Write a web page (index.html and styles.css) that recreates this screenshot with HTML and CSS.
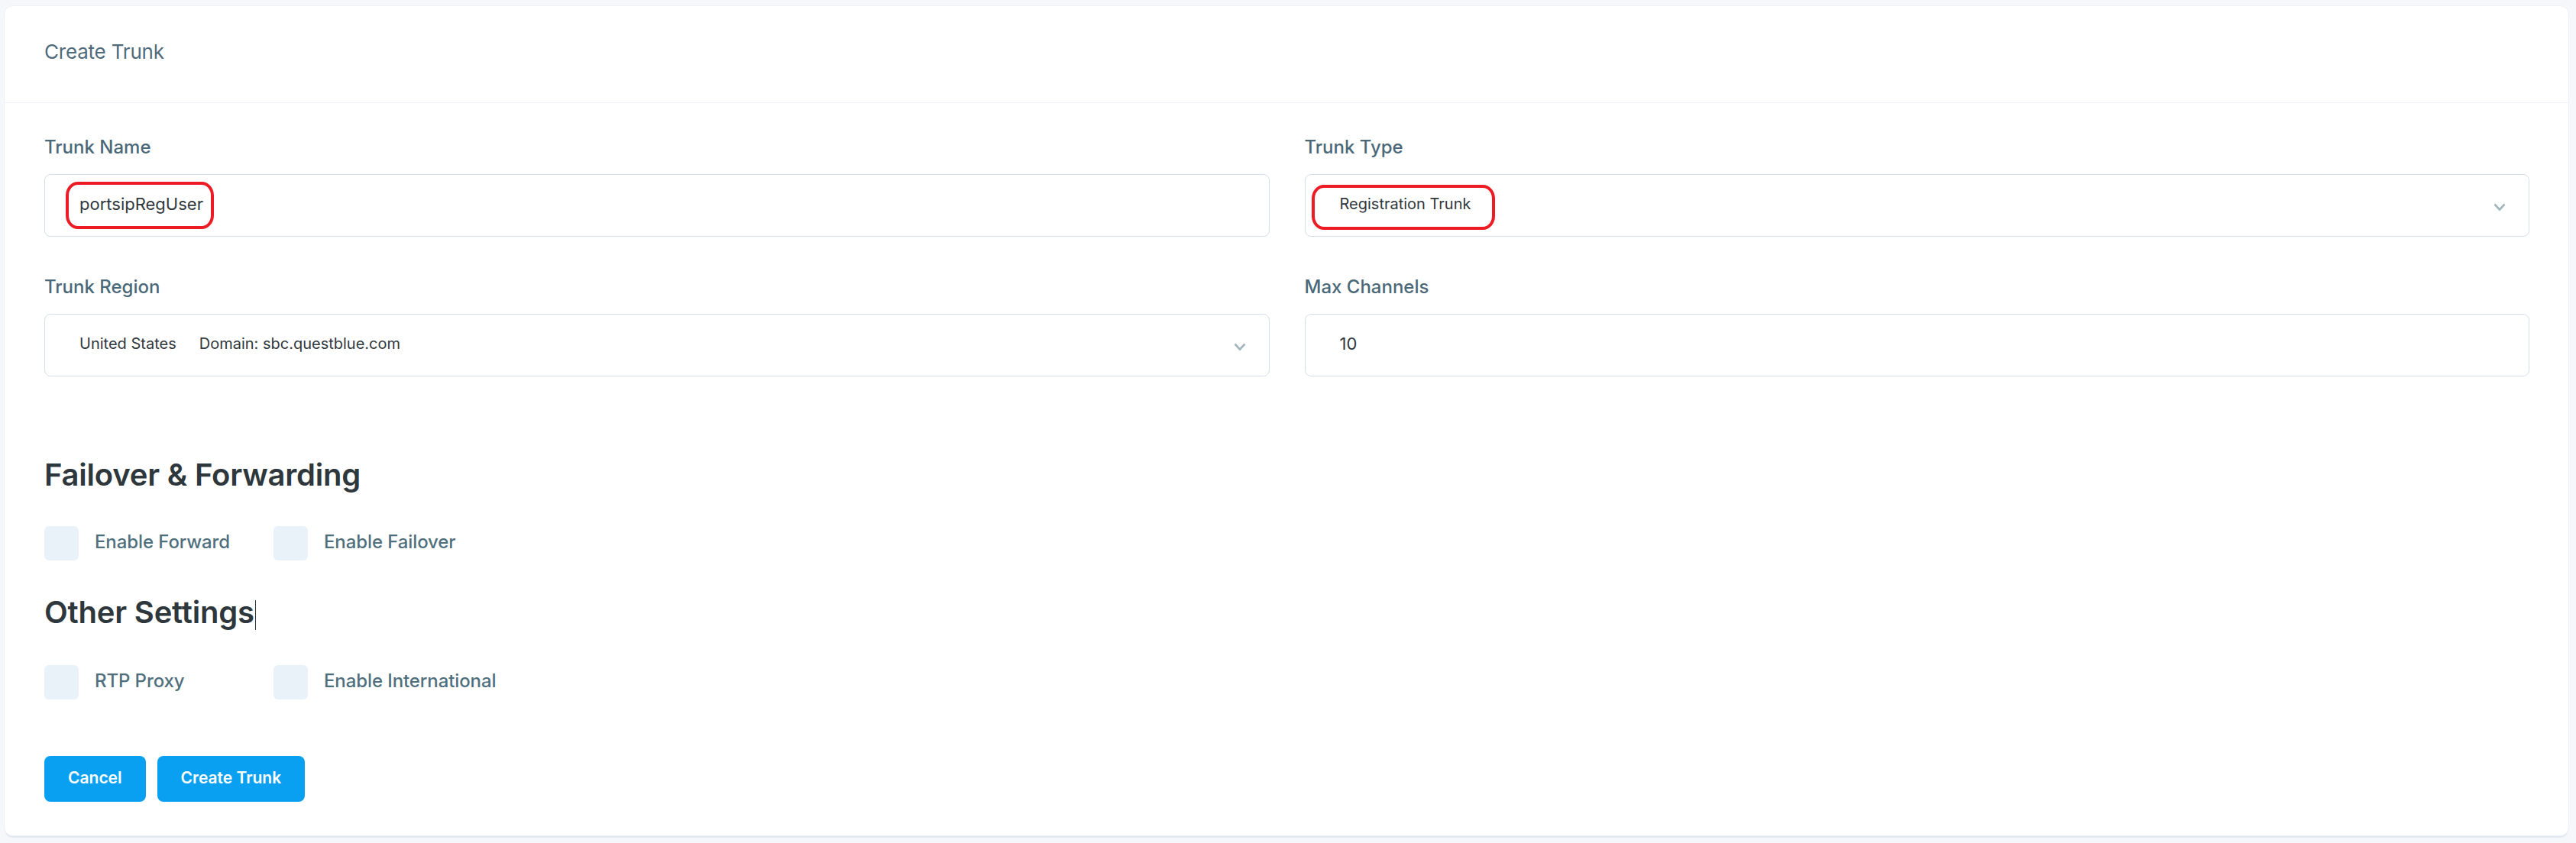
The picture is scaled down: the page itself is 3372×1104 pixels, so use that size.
FILE: index.html
```html
<!DOCTYPE html>
<html lang="en">
<head>
<meta charset="utf-8">
<title>Create Trunk</title>
<link rel="stylesheet" href="styles.css">
</head>
<body>
<div class="card">
  <div class="card-header">
    <h1 class="card-title">Create Trunk</h1>
  </div>
  <div class="card-body">
    <div class="form-grid">
      <div class="field">
        <label class="field-label">Trunk Name</label>
        <div class="control">
          <span class="control-text input-text">portsipRegUser</span>
          <span class="mark mark-name"></span>
        </div>
      </div>
      <div class="field">
        <label class="field-label">Trunk Type</label>
        <div class="control select">
          <span class="control-text select-text">Registration Trunk</span>
          <svg class="chevron" width="16" height="11" viewBox="0 0 16 11"><polyline points="1.5,1.5 8,8.5 14.5,1.5" fill="none" stroke="#a3b5bf" stroke-width="2.6"/></svg>
          <span class="mark mark-type"></span>
        </div>
      </div>
      <div class="field">
        <label class="field-label">Trunk Region</label>
        <div class="control select">
          <span class="control-text select-text"><span class="region">United States</span><span>Domain: sbc.questblue.com</span></span>
          <svg class="chevron" width="16" height="11" viewBox="0 0 16 11"><polyline points="1.5,1.5 8,8.5 14.5,1.5" fill="none" stroke="#a3b5bf" stroke-width="2.6"/></svg>
        </div>
      </div>
      <div class="field">
        <label class="field-label">Max Channels</label>
        <div class="control">
          <span class="control-text input-text">10</span>
        </div>
      </div>
    </div>

    <h2 class="section-title first">Failover &amp; Forwarding</h2>
    <div class="check-row">
      <div class="check"><span class="box"></span><span class="check-label">Enable Forward</span></div>
      <div class="check"><span class="box"></span><span class="check-label">Enable Failover</span></div>
    </div>

    <h2 class="section-title">Other Settings<span class="caret"></span></h2>
    <div class="check-row second">
      <div class="check"><span class="box"></span><span class="check-label">RTP Proxy</span></div>
      <div class="check"><span class="box"></span><span class="check-label">Enable International</span></div>
    </div>

    <div class="actions">
      <button class="btn btn-cancel">Cancel</button>
      <button class="btn btn-create">Create Trunk</button>
    </div>
  </div>
</div>
</body>
</html>
```

FILE: styles.css
```css
* { box-sizing: border-box; }

html, body {
  margin: 0;
  background: #f6f7fb;
}

body {
  padding: 7px 9px 0 5px;
  font-family: Inter, "Noto Sans", "Liberation Sans", sans-serif;
  height: 1104px;
  overflow: hidden;
}

.card {
  background: #ffffff;
  border: 1px solid #edf0f5;
  border-radius: 12px;
  box-shadow: 0 3px 1px -1px #e3e8f0;
}

.card-header {
  height: 127px;
  padding: 44px 52px 0 52px;
  border-bottom: 1px solid #eef2f6;
}

.card-title {
  margin: 0;
  font-size: 26px;
  line-height: 32px;
  font-weight: 400;
  letter-spacing: -0.2px;
  color: #4f6b7b;
}

.card-body {
  padding: 43px 51px 44px 52px;
}

.form-grid {
  display: grid;
  grid-template-columns: 1fr 1fr;
  column-gap: 46px;
  row-gap: 51px;
}

.field-label {
  display: block;
  font-size: 24px;
  line-height: 30px;
  font-weight: 500;
  color: #4a6878;
  margin-bottom: 20px;
}

.control {
  position: relative;
  height: 82px;
  border: 1px solid #d6dfe5;
  border-radius: 8px;
  display: flex;
  align-items: center;
  padding: 0 30px 5px 45px;
}

.control-text {
  color: #30383d;
}

.input-text {
  font-size: 22px;
}

.select-text {
  font-size: 20px;
  flex: 1;
  display: flex;
  gap: 30px;
}

.chevron {
  margin-top: 10px;
}

.mark {
  position: absolute;
  border: 4.5px solid #ed1c24;
  border-radius: 16px / 18px;
}

.mark-name {
  left: 27px;
  top: 9px;
  width: 194px;
  height: 62px;
}

.mark-type {
  left: 8px;
  top: 13px;
  width: 240px;
  height: 59px;
}

.section-title {
  margin: 45px 0 0 0;
  font-size: 40px;
  line-height: 46px;
  font-weight: 600;
  letter-spacing: -0.2px;
  color: #2d373c;
}

.section-title.first {
  margin-top: 106px;
}

.caret {
  display: inline-block;
  width: 1px;
  height: 39px;
  background: #2d373c;
  vertical-align: -9px;
  margin-left: 1px;
}

.check-row {
  display: flex;
  margin-top: 44px;
}

.check-row.second {
  margin-top: 46px;
}

.check {
  width: 300px;
  height: 45px;
  display: flex;
  align-items: center;
  gap: 21px;
}

.box {
  width: 45px;
  height: 45px;
  border-radius: 6px;
  background: #e9f2f8;
  flex: none;
}

.check-label {
  font-size: 24px;
  font-weight: 500;
  letter-spacing: -0.1px;
  color: #4f6f7d;
  padding-bottom: 5px;
}

.actions {
  display: flex;
  gap: 15px;
  margin-top: 74px;
}

.btn {
  height: 60px;
  padding: 0 31px 3px;
  border: none;
  border-radius: 8px;
  background: #0aa0f2;
  color: #ffffff;
  font-family: Inter, "Noto Sans", "Liberation Sans", sans-serif;
  font-size: 21px;
  font-weight: 600;
}
```
